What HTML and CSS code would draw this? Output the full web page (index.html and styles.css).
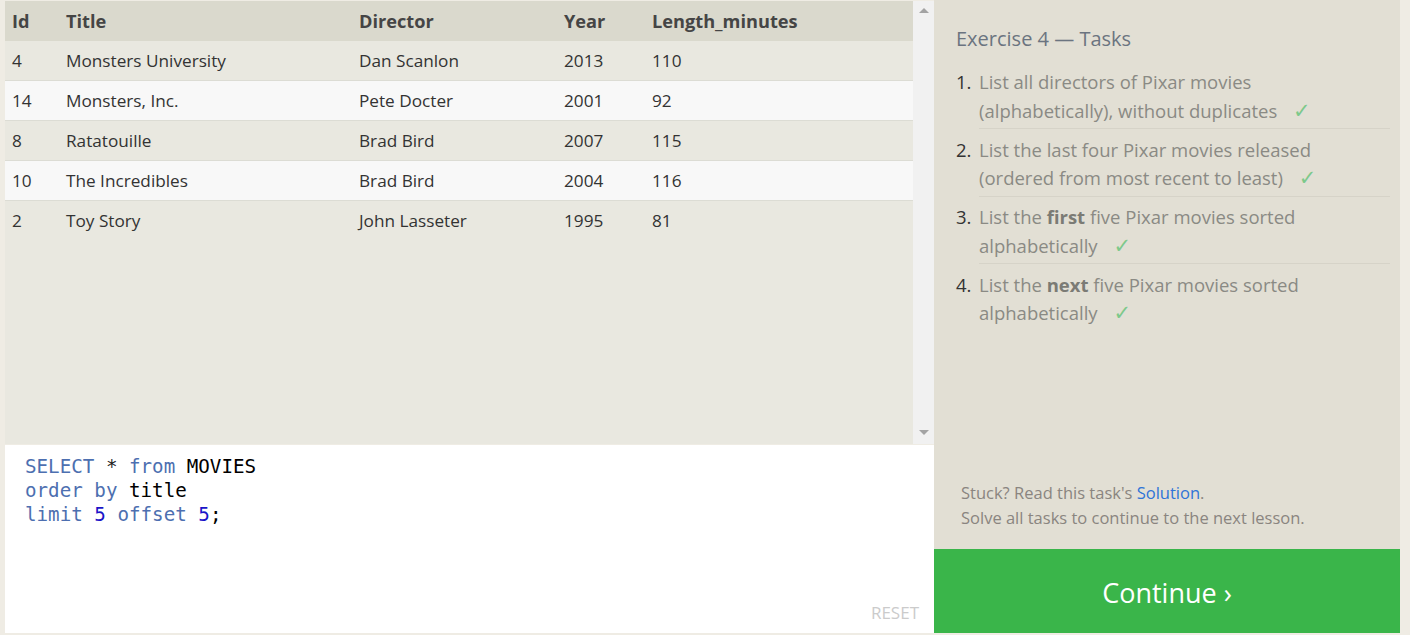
FILE: index.html
```html
<!DOCTYPE html>
<html>
<head>
<meta charset="utf-8">
<link rel="stylesheet" href="styles.css">
</head>
<body>
<div class="page">
  <div class="workspace">
    <div class="results">
      <div class="table-wrap">
        <table class="grid">
          <thead>
            <tr><th class="c-id">Id</th><th class="c-title">Title</th><th class="c-dir">Director</th><th class="c-year">Year</th><th>Length_minutes</th></tr>
          </thead>
          <tbody>
            <tr><td>4</td><td>Monsters University</td><td>Dan Scanlon</td><td>2013</td><td>110</td></tr>
            <tr><td>14</td><td>Monsters, Inc.</td><td>Pete Docter</td><td>2001</td><td>92</td></tr>
            <tr><td>8</td><td>Ratatouille</td><td>Brad Bird</td><td>2007</td><td>115</td></tr>
            <tr><td>10</td><td>The Incredibles</td><td>Brad Bird</td><td>2004</td><td>116</td></tr>
            <tr class="last"><td>2</td><td>Toy Story</td><td>John Lasseter</td><td>1995</td><td>81</td></tr>
          </tbody>
        </table>
      </div>
      <div class="scrollbar">
        <span class="arrow up"></span>
        <span class="arrow down"></span>
      </div>
    </div>
    <div class="editor">
      <pre class="code"><span class="kw">SELECT</span> <span class="op">*</span> <span class="kw">from</span> MOVIES
<span class="kw">order</span> <span class="kw">by</span> <span class="id">title</span>
<span class="kw">limit</span> <span class="num">5</span> <span class="kw">offset</span> <span class="num">5</span>;</pre>
      <div class="reset">RESET</div>
    </div>
  </div>
  <div class="side">
    <div class="tasks">
      <h2 class="tasks-title">Exercise 4 — Tasks</h2>
      <ol class="task-list">
        <li class="task"><span class="n">1.</span><span class="t">List all directors of Pixar movies (alphabetically), without duplicates <span class="check">✓</span></span></li>
        <li class="task"><span class="n">2.</span><span class="t">List the last four Pixar movies released (ordered from most recent to least) <span class="check">✓</span></span></li>
        <li class="task"><span class="n">3.</span><span class="t">List the <b>first</b> five Pixar movies sorted alphabetically <span class="check">✓</span></span></li>
        <li class="task nob"><span class="n">4.</span><span class="t">List the <b>next</b> five Pixar movies sorted alphabetically <span class="check">✓</span></span></li>
      </ol>
      <div class="hint">
        <p>Stuck? Read this task's <a class="link">Solution</a>.</p>
        <p>Solve all tasks to continue to the next lesson.</p>
      </div>
    </div>
    <div class="continue">Continue ›</div>
  </div>
</div>
</body>
</html>
```
FILE: styles.css
```css
html, body {
  margin: 0;
  padding: 0;
}
body {
  background: #efece4;
  font-family: "Open Sans", "Liberation Sans", sans-serif;
  width: 1410px;
  height: 635px;
  overflow: hidden;
}
.page {
  display: flex;
  padding: 1px 10px 2px 5px;
  height: 632px;
}
.workspace {
  width: 929px;
  display: flex;
  flex-direction: column;
}
.results {
  height: 443px;
  display: flex;
  background: #e9e8e0;
}
.table-wrap {
  flex: 1;
}
.grid {
  width: 908px;
  border-collapse: collapse;
  font-size: 17.2px;
  color: #333;
}
.grid th {
  background: #dad9cd;
  height: 40px;
  text-align: left;
  font-weight: 700;
  color: #454545;
  padding: 0 0 0 7px;
  font-size: 18.2px;
}
.grid td {
  height: 39px;
  padding: 0 0 0 7px;
  border-bottom: 1px solid #dcdcd4;
}
.grid tbody tr:nth-child(even) td {
  background: #f8f8f8;
}
.grid tr.last td {
  border-bottom: none;
}
.c-id { width: 47px; }
.c-title { width: 286px; }
.c-dir { width: 198px; }
.c-year { width: 81px; }
.scrollbar {
  width: 21px;
  background: #f1f1f1;
  display: flex;
  flex-direction: column;
  justify-content: space-between;
  align-items: center;
  padding: 7px 0 9px;
}
.arrow {
  width: 0;
  height: 0;
  border-left: 5px solid transparent;
  border-right: 5px solid transparent;
}
.arrow.up { border-bottom: 5px solid #a3a3a3; }
.arrow.down { border-top: 5px solid #a3a3a3; }
.editor {
  flex: 1;
  background: #fff;
  margin-top: 1px;
  display: flex;
  flex-direction: column;
  justify-content: space-between;
}
.code {
  margin: 0;
  padding: 10px 20px;
  font-family: "DejaVu Sans Mono", "Liberation Mono", monospace;
  font-size: 19.2px;
  line-height: 24px;
  color: #000;
}
.kw { color: #4d6fb0; }
.op { color: #222; }
.id { color: #000; }
.num { color: #1a14c8; }
.reset {
  align-self: flex-end;
  margin: 0 15px 9px 0;
  color: #cbcbcb;
  font-size: 17px;
  font-family: "Open Sans", "Liberation Sans", sans-serif;
}
.side {
  width: 466px;
  background: #e2dfd4;
  display: flex;
  flex-direction: column;
  margin-top: -1px;
}
.tasks {
  flex: 1;
  padding: 23px 10px 0 22px;
  display: flex;
  flex-direction: column;
}
.tasks-title {
  margin: 0 0 13px;
  font-size: 20px;
  font-weight: 400;
  color: #6b7480;
  line-height: 32px;
}
.task-list {
  list-style: none;
  margin: 0;
  padding: 0;
}
.task {
  display: flex;
  font-size: 18.5px;
  line-height: 28.5px;
}
.task .n {
  width: 23px;
  flex: none;
  color: #333;
}
.task .t {
  flex: 1;
  color: #8a8a84;
  border-bottom: 1px solid #d6d3c8;
  padding: 0 0 3px;
  margin-bottom: 6.5px;
}
.task.nob .t {
  border-bottom: none;
}
.task b {
  color: #7b7b75;
}
.check {
  color: #7dc98b;
  margin-left: 11px;
  font-family: "DejaVu Sans", sans-serif;
  font-size: 21px;
  line-height: 20px;
}
.hint {
  margin-top: auto;
  padding: 0 0 19px 5px;
  font-size: 16.5px;
  line-height: 25px;
  color: #8a8580;
}
.hint p { margin: 0; }
.link { color: #2f74d8; }
.continue {
  height: 84px;
  background: #3ab54a;
  color: #fff;
  font-size: 27px;
  display: flex;
  align-items: center;
  justify-content: center;
  padding-top: 2px;
  box-sizing: border-box;
}
```
